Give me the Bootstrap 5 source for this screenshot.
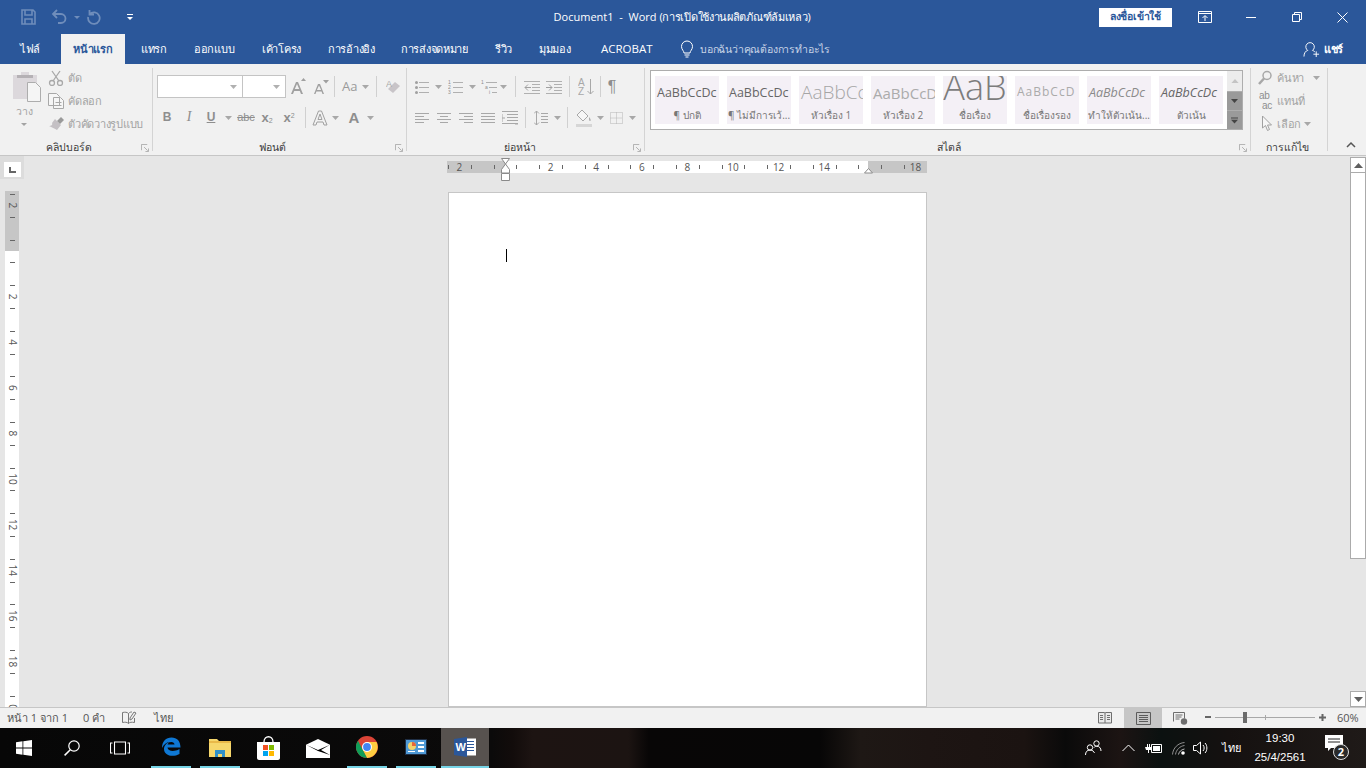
<!DOCTYPE html>
<html lang="th">
<head>
<meta charset="UTF-8">
<meta name="viewport" content="width=device-width, initial-scale=1.0">
<title>Document1 - Word</title>
<link href="https://cdn.jsdelivr.net/npm/bootstrap@5.3.3/dist/css/bootstrap.min.css" rel="stylesheet">
<style>
  /* -------- base -------- */
  html,body{height:100%;overflow:hidden;}
  body{font-family:"Open Sans","Noto Sans","Liberation Sans",sans-serif;font-size:11px;color:#444;background:#e6e6e6;line-height:1.2;}
  svg{display:block;flex:none;}
  .app-shell{height:768px;}

  /* -------- title bar + tabs -------- */
  .title-bar{height:34px;background:#2b579a;color:#fff;}
  .qat{width:540px;padding-left:21px;}
  .doc-title{width:284px;font-size:11px;text-align:center;white-space:nowrap;}
  .doc-state{letter-spacing:-.3px;}
  .signin-btn{width:73px;height:19px;margin-left:275px;background:#fff;color:#2b579a;font-size:10.5px;letter-spacing:-.2px;font-weight:600;border-radius:1px;}
  .win-btn{width:46px;height:34px;}
  .win-first{margin-left:9.5px;}
  .tab-bar{height:30px;background:#2b579a;color:#fff;font-size:11px;letter-spacing:-.3px;}
  .tab-item{height:30px;white-space:nowrap;padding-left:16px;}
  .tab-item.is-active{background:#f1f1f1;color:#2b579a;font-weight:600;padding-left:0;}
  .tab-latin{font-size:11.5px;letter-spacing:0;}
  .tell-me{color:#c8d4e6;font-size:10.5px;letter-spacing:-.2px;}
  .share-box{margin-right:23px;font-size:11px;font-weight:600;}

  /* -------- ribbon -------- */
  .ribbon{height:92px;padding:4px 0;background:#f1f1f1;border-bottom:1px solid #c6c6c6;}
  .rgroup{height:83px;border-right:1px solid #d4d4d4;flex:none;}
  .rg-clip{width:153px;}
  .rg-font{width:254px;}
  .rg-para{width:238px;}
  .rg-style{width:606px;padding-left:5px;}
  .rg-edit{width:77px;}
  .rg-foot{height:14px;margin-top:auto;margin-bottom:-3px;padding-right:3px;}
  .rg-name{flex:1;text-align:center;font-size:10.5px;color:#3b3b3b;white-space:nowrap;}
  .rg-launch{width:8px;margin-bottom:-1px;}
  .r-dim{color:#a3a3a3;}
  .paste-col{width:48px;padding:4px 0 0 13px;}
  .paste-name{width:22px;text-align:center;margin-top:3px;font-size:10.5px;}
  .small-stack{margin-top:-2px;}
  .small-row{height:23px;white-space:nowrap;font-size:11px;letter-spacing:-.25px;}
  .small-row svg{margin-right:3px;}
  .rb-row{height:23px;padding-left:4px;}
  .rb-row + .rb-row{margin-top:8px;}
  .rb-row.row-top{margin-top:7px;}
  .combo-box{height:23px;background:#fff;border:1px solid #c4c4c4;flex:none;}
  .combo-name{width:86px;}
  .combo-size{width:44px;margin-left:-1px;}
  .r-sep{width:1px;height:21px;background:#d0d0d0;flex:none;}
  .fmt-btn{width:22px;text-align:center;color:#8e8e8e;font-weight:700;font-size:12px;font-family:"Liberation Sans",sans-serif;flex:none;}

  /* gallery */
  .gallery{height:60px;margin-top:2px;width:593px;background:#fff;border:1px solid #adadad;}
  .gallery-items{padding:5px 0 0 4px;gap:8px;}
  .style-chip{width:64px;height:48px;background:#f4f0f6;overflow:hidden;text-align:center;flex:none;}
  .chip-top{height:33px;white-space:nowrap;overflow:hidden;font-size:12.5px;color:#666;padding-left:2px;}
  .chip-name{height:15px;font-size:10px;color:#777;white-space:nowrap;overflow:hidden;}
  .chip-h1{font-size:19px;color:#a5a5a5;font-weight:300;}
  .chip-h2{font-size:15px;color:#ababab;}
  .chip-title{font-size:36px;color:#7c7c7c;font-weight:300;line-height:21px;height:30px;padding-left:0;}
  .chip-sub{font-size:12px;letter-spacing:1px;color:#aaa;}
  .chip-em{font-style:italic;color:#8a8a8a;}
  .gal-scroll{width:15px;margin-left:auto;}
  .gal-btn{height:19px;background:#9a9a9a;border-top:1px solid #adadad;}
  .gal-btn.is-up{height:20px;background:#ececec;border-top:0;}
  .edit-stack{margin-top:-2px;}
  .edit-row{height:23px;padding-left:7px;white-space:nowrap;letter-spacing:-.2px;}
  .edit-name{margin-left:1px;}
  .collapse-box{padding:0 9px 2px 0;}

  /* -------- document area -------- */
  .doc-area{height:551px;background:#e6e6e6;overflow:hidden;}
  .left-rail{width:24px;flex:none;}
  .ruler-corner{height:23px;background:#dcdcdc;padding:6px 0 0 4px;}
  .corner-box{width:17px;height:15px;background:#fff;}
  .v-ruler{margin:12px 0 0 5px;}
  .doc-center{padding:2px 0 0 2px;min-width:0;}
  .doc-page{width:479px;height:520px;margin:10px 1px 0 0;background:#fff;border:1px solid #c6c6c6;padding:56px 0 0 57px;}
  .text-caret{width:1px;height:13px;background:#000;}
  .scroll-rail{width:16px;flex:none;background:#e6e6e6;}
  .scroll-btn{height:16px;margin-top:1px;background:#fff;border:1px solid #ababab;}
  .scroll-thumb{height:386px;background:#fff;border:1px solid #ababab;border-top:0;}
  .scroll-gap{height:131px;}

  /* -------- status bar -------- */
  .status-bar{height:21px;background:#f1f1f1;border-top:1px solid #c6c6c6;color:#555;font-size:11px;white-space:nowrap;padding-bottom:1px;}
  .view-btn{width:38px;height:20px;margin-bottom:-1px;}
  .view-btn.is-on{background:#c6c6c6;}
  .view-web{margin-left:-1px;}
  .zoom-minus{margin-left:6px;}
  .zoom-track{width:100px;height:1px;background:#a8a8a8;margin-left:3px;}
  .zoom-thumb{width:4px;height:11px;background:#6b6b6b;left:28px;}
  .zoom-mid{width:1px;height:5px;background:#a8a8a8;left:50px;}
  .zoom-plus{margin-left:4px;}
  .zoom-val{margin-left:11px;width:29px;}

  /* -------- taskbar -------- */
  .task-bar{height:40px;color:#fff;background:linear-gradient(90deg,#070707 0,#0b0a0a 36%,#120c0b 37.5%,#1d1412 39%,#1c1412 46%,#080606 47.5%,#070606 60%,#1e1815 63%,#1d1513 68%,#1b1311 75%,#0a0a0a 78%,#1c1413 82%,#0b1110 85%,#151110 90%,#1f1a18 100%);}
  .task-btn{width:48px;height:40px;flex:none;}
  .task-slot{height:40px;flex:none;}
  .task-btn.is-run{border-bottom:2px solid #76d4e6;width:40px;}
  .task-btn.is-word{background:#57524f;width:48px;margin-left:5px;}
  .tray-lang{margin-left:13px;width:19px;font-size:11px;}
  .tray-clock{width:56px;margin-left:11px;text-align:center;font-family:"Liberation Sans",sans-serif;font-size:11.5px;line-height:19px;white-space:nowrap;}
  .tray-note{margin:0 17px;width:24px;height:26px;}
  .note-count{left:8px;top:9px;width:16px;height:16px;border-radius:50%;border:1px solid #ddd;background:#2a2a2a;font-size:11px;}
</style>
</head>
<body>
<div class="app-shell d-flex flex-column">

  <!-- title bar -->
  <div class="title-bar d-flex align-items-center">
    <div class="qat d-flex align-items-center">
      <svg width="30" height="16" viewBox="0 0 30 16" fill="none" stroke="#6f8dbb" stroke-width="1.6"><path d="M1 1h11l2 2v12H1zM4 1v5h7V1M4 15V10h7v5"/></svg>
      <svg width="21" height="16" viewBox="0 0 21 16" fill="none" stroke="#6f8dbb" stroke-width="1.8"><path d="M6 1 2 5l4 4M2 5h8a4.500 4.500 0 0 1 0 9H7"/></svg>
      <svg width="14" height="16" viewBox="0 0 14 16" fill="#6f8dbb"><path d="M2 7h6l-3 3z"/></svg>
      <svg width="40" height="16" viewBox="0 0 40 16" fill="none" stroke="#6f8dbb" stroke-width="1.8"><path d="M3.500 1v4.500H8M3.800 5A5.800 5.800 0 1 1 2.200 8"/></svg>
      <svg width="8" height="16" viewBox="0 0 8 16" fill="#fff"><path d="M1 5h6v1H1zM1 8h6l-3 3z"/></svg>
    </div>
    <div class="doc-title">Document1 &nbsp;-&nbsp; Word <span class="doc-state">(การเปิดใช้งานผลิตภัณฑ์ล้มเหลว)</span></div>
    <button class="signin-btn btn p-0 border-0 rounded-0 d-flex align-items-center justify-content-center">ลงชื่อเข้าใช้</button>
    <div class="win-btn win-first d-flex align-items-center justify-content-center">
      <svg width="14" height="12" viewBox="0 0 14 12" fill="none" stroke="#fff"><path d="M.5.500h13v11H.5zM.5 2.500h13M7 10V5M4.500 7 7 4.500 9.500 7"/></svg>
    </div>
    <div class="win-btn d-flex align-items-center justify-content-center">
      <svg width="10" height="1" viewBox="0 0 10 1"><path d="M0 0h10v1H0z" fill="#fff"/></svg>
    </div>
    <div class="win-btn d-flex align-items-center justify-content-center">
      <svg width="10" height="10" viewBox="0 0 10 10" fill="none" stroke="#fff"><path d="M.5 2.500h7v7h-7zM2.500 2.500v-2h7v7h-2"/></svg>
    </div>
    <div class="win-btn d-flex align-items-center justify-content-center">
      <svg width="11" height="11" viewBox="0 0 11 11" stroke="#fff"><path d="M.5.500l10 10M10.500.500l-10 10"/></svg>
    </div>
  </div>

  <!-- tabs -->
  <div class="tab-bar d-flex align-items-center">
    <div class="tab-item d-flex align-items-center" style="width:61px;padding-left:20px">ไฟล์</div>
    <div class="tab-item is-active d-flex align-items-center justify-content-center" style="width:64px">หน้าแรก</div>
    <div class="tab-item d-flex align-items-center" style="width:53px">แทรก</div>
    <div class="tab-item d-flex align-items-center" style="width:68px">ออกแบบ</div>
    <div class="tab-item d-flex align-items-center" style="width:66px">เค้าโครง</div>
    <div class="tab-item d-flex align-items-center" style="width:73px">การอ้างอิง</div>
    <div class="tab-item d-flex align-items-center" style="width:94px">การส่งจดหมาย</div>
    <div class="tab-item d-flex align-items-center" style="width:44px">รีวิว</div>
    <div class="tab-item d-flex align-items-center" style="width:62px">มุมมอง</div>
    <div class="tab-item tab-latin d-flex align-items-center" style="width:93px">ACROBAT</div>
    <svg width="18" height="18" viewBox="0 0 18 18" fill="none" stroke="#fff"><path d="M6 13c0-2-2.500-3.500-2.500-6.500a5.500 5.500 0 0 1 11 0C14.500 9.500 12 11 12 13zM6.500 15h5M7.500 17h3"/></svg>
    <div class="tell-me ms-1 flex-grow-1">บอกฉันว่าคุณต้องการทำอะไร</div>
    <div class="share-box d-flex align-items-center">
      <svg width="17" height="18" viewBox="0 0 18 18" fill="none" stroke="#fff"><path d="M1 17c0-4 2-6 4-6.500a4.500 4.500 0 1 1 5 0c1 .3 1.800.8 2.500 1.500M11 14.500h6M14 11.500v6"/></svg>
      <span class="ms-1">แชร์</span>
    </div>
  </div>

  <!-- ribbon -->
  <div class="ribbon d-flex">

    <div class="rgroup rg-clip d-flex flex-column">
      <div class="d-flex">
        <div class="paste-col r-dim">
          <svg width="28" height="30" viewBox="0 0 28 30"><path d="M0 3h8V0h8v3h8v24H0z" fill="#dcd8dc"/><path d="M4 3h16v3H4z" fill="#b5b1b5"/><path d="M14.500 10.500h8l5 5v14h-13z" fill="#f5f5f5" stroke="#adadad"/></svg>
          <div class="paste-name">วาง</div>
          <svg width="22" height="14" viewBox="0 0 22 14" fill="#a3a3a3"><path d="M8 5h6l-3 3z"/></svg>
        </div>
        <div class="small-stack r-dim">
          <div class="small-row d-flex align-items-center">
            <svg width="17" height="16" viewBox="0 0 17 16" fill="none" stroke="#a8a8a8" stroke-width="1.300"><circle cx="4" cy="13" r="2.500"/><circle cx="12" cy="13" r="2.500"/><path d="M5 11 12 1M11 11 4 1"/></svg>
            <span>ตัด</span>
          </div>
          <div class="small-row d-flex align-items-center">
            <svg width="17" height="16" viewBox="0 0 17 16" fill="#f6f6f6" stroke="#a8a8a8"><path d="M.5.500h8l3 3v9h-11zM5.500 4.500h7l3 3v8h-10zM7.500 9.500h6M7.500 12.500h6"/></svg>
            <span>คัดลอก</span>
          </div>
          <div class="small-row d-flex align-items-center">
            <svg width="17" height="16" viewBox="0 0 17 16"><path d="M7 3l6 6-4 5C6 12 3 11 1 10c2 0 4-1 3-3z" fill="#c4c0c4"/><path d="M9 5l4-4 3 3-4 4z" fill="#9a9a9a"/></svg>
            <span>ตัวคัดวางรูปแบบ</span>
          </div>
        </div>
      </div>
      <div class="rg-foot d-flex align-items-center">
        <div class="rg-name pe-1">คลิปบอร์ด</div>
        <svg class="rg-launch" width="8" height="8" viewBox="0 0 9 9" fill="none" stroke="#a8a8a8"><path d="M.5 7V.500H7M3.500 3.500l4 4M8.500 5v3.500H5"/></svg>
      </div>
    </div>

    <div class="rgroup rg-font d-flex flex-column">
      <div class="rb-row row-top d-flex align-items-center">
        <div class="combo-box combo-name d-flex align-items-center justify-content-end pe-1">
          <svg width="8" height="4" viewBox="0 0 8 4" fill="#b0b0b0"><path d="M0 0h7L3.500 4z"/></svg>
        </div>
        <div class="combo-box combo-size d-flex align-items-center justify-content-end pe-1">
          <svg width="8" height="4" viewBox="0 0 8 4" fill="#b0b0b0"><path d="M0 0h7L3.500 4z"/></svg>
        </div>
        <svg width="24" height="18" viewBox="0 0 24 18" fill="#a0a0a0" style="margin-left:3px"><path d="M2 16 7 4h2l5 12h-2l-1.200-3H5.200L4 16zM5.800 11h4.400L8 6z"/><path d="M12 3l2.500-3L17 3z"/></svg>
        <svg width="19" height="18" viewBox="0 0 19 18" fill="#a0a0a0"><path d="M1 16 5 6h2l4 10H9.500l-.9-2.500H3.400L2.500 16zM3.900 12h4.200L6 7.500zM10 2h6l-3 3.500z"/></svg>
        <div class="r-sep" style="margin-left:2px"></div>
        <span style="width:27px;padding-left:7px;font-size:13px;color:#9a9a9a">Aa</span>
        <svg width="14" height="8" viewBox="0 0 14 8" fill="#a8a8a8" style="margin-left:-3px"><path d="M3 2h7L6.500 6z"/></svg>
        <div class="r-sep" style="margin-left:3px"></div>
        <svg width="15" height="16" viewBox="0 0 15 16" style="margin-left:9px"><path d="M2 10 9 3l5 4-7 7z" fill="#c8c4c8"/><text x="0" y="8" font-size="9" fill="#a8a8a8" font-family="Liberation Sans">A</text></svg>
      </div>
      <div class="rb-row d-flex align-items-center" style="padding-left:3px">
        <div class="fmt-btn">B</div>
        <div class="fmt-btn fst-italic fw-normal" style="font-family:'Liberation Serif',serif;font-size:14px">I</div>
        <div class="fmt-btn text-decoration-underline">U</div>
        <svg width="14" height="8" viewBox="0 0 14 8" fill="#a8a8a8"><path d="M3 2h7L6.500 6z"/></svg>
        <div class="fmt-btn fw-normal text-decoration-line-through" style="font-size:11px;width:20px">abc</div>
        <div class="fmt-btn" style="font-size:13px">x<sub style="font-size:7px;font-weight:400">2</sub></div>
        <div class="fmt-btn" style="font-size:13px">x<sup style="font-size:7px;font-weight:400">2</sup></div>
        <div class="r-sep" style="margin-left:5px"></div>
        <svg width="29" height="18" viewBox="0 0 29 18" fill="#f1f1f1" stroke="#a0a0a0" style="margin-left:6px"><path d="M1 16 6.500 2h3L15 16h-3l-1-3H5l-1 3zM6 10.500h4L8 5z"/></svg>
        <svg width="9" height="8" viewBox="0 0 9 8" fill="#a8a8a8" style="margin-left:-10px"><path d="M1 2h7L4.500 6z"/></svg>
        <div class="fmt-btn" style="font-size:15px;margin-left:3px">A</div>
        <svg width="14" height="8" viewBox="0 0 14 8" fill="#a8a8a8"><path d="M2 2h7L5.500 6z"/></svg>
      </div>
      <div class="rg-foot d-flex align-items-center">
        <div class="rg-name pe-1">ฟอนต์</div>
        <svg class="rg-launch" width="8" height="8" viewBox="0 0 9 9" fill="none" stroke="#a8a8a8"><path d="M.5 7V.500H7M3.500 3.500l4 4M8.500 5v3.500H5"/></svg>
      </div>
    </div>

    <div class="rgroup rg-para d-flex flex-column">
      <div class="rb-row row-top d-flex align-items-center" style="padding-left:8px">
        <svg width="15" height="14" viewBox="0 0 15 14" stroke="#b0b0b0"><path d="M4 2.500h10M4 7.500h10M4 12.500h10"/><g fill="#a0a0a0" stroke="none"><circle cx="1.500" cy="2.500" r="1.500"/><circle cx="1.500" cy="7.500" r="1.500"/><circle cx="1.500" cy="12.500" r="1.500"/></g></svg>
        <svg width="17" height="8" viewBox="0 0 17 8" fill="#a8a8a8"><path d="M5 2h7L8.500 6z"/></svg>
        <svg width="16" height="14" viewBox="0 0 16 14" stroke="#b0b0b0" style="margin-left:1px"><path d="M5 2.500h10M5 7.500h10M5 12.500h10"/><g font-size="5" fill="#8e8e8e" stroke="none" font-family="Liberation Sans"><text x="0" y="4">1</text><text x="0" y="9">2</text><text x="0" y="14">3</text></g></svg>
        <svg width="17" height="8" viewBox="0 0 17 8" fill="#a8a8a8"><path d="M5 2h7L8.500 6z"/></svg>
        <svg width="17" height="14" viewBox="0 0 17 14" stroke="#b0b0b0"><path d="M5 2.500h11M8 7.500h8M11 12.500h5"/><g font-size="5" fill="#8e8e8e" stroke="none" font-family="Liberation Sans"><text x="0" y="4">1</text><text x="4" y="9">a</text><text x="8" y="14">i</text></g></svg>
        <svg width="17" height="8" viewBox="0 0 17 8" fill="#a8a8a8"><path d="M2 2h7L5.500 6z"/></svg>
        <div class="r-sep"></div>
        <svg width="17" height="14" viewBox="0 0 17 14" stroke="#b0b0b0" fill="none" style="margin-left:8px"><path d="M0 1.500h16M8 4.500h8M8 7.500h8M8 10.500h8M0 13.500h16"/><path d="M7 7.500H1M4 4.500l-3 3 3 3" stroke="#a0a0a0"/></svg>
        <svg width="17" height="14" viewBox="0 0 17 14" stroke="#b0b0b0" fill="none" style="margin-left:5px"><path d="M0 1.500h16M8 4.500h8M8 7.500h8M8 10.500h8M0 13.500h16"/><path d="M0 7.500h6M3 4.500l3 3-3 3" stroke="#a0a0a0"/></svg>
        <div class="r-sep" style="margin-left:6px"></div>
        <svg width="17" height="18" viewBox="0 0 17 18" fill="none" stroke="#a8a8a8" style="margin-left:8px"><path d="M12.500 1v15M9.500 13l3 3 3-3"/><text x="0" y="8" font-size="10" fill="#a8a8a8" stroke="none" font-family="Liberation Sans">A</text><text x="0" y="17" font-size="10" fill="#a8a8a8" stroke="none" font-family="Liberation Sans">Z</text></svg>
        <div class="r-sep" style="margin-left:5px"></div>
        <div class="fmt-btn" style="font-size:16px;font-weight:400">¶</div>
      </div>
      <div class="rb-row d-flex align-items-center" style="padding-left:8px">
        <svg width="22" height="12" viewBox="0 0 22 12" stroke="#a8a8a8"><path d="M0 1.500h14M0 4.500h9M0 7.500h14M0 10.500h9"/></svg>
        <svg width="22" height="12" viewBox="0 0 22 12" stroke="#a8a8a8"><path d="M0 1.500h14M3 4.500h8M0 7.500h14M3 10.500h8"/></svg>
        <svg width="22" height="12" viewBox="0 0 22 12" stroke="#a8a8a8"><path d="M0 1.500h14M5 4.500h9M0 7.500h14M5 10.500h9"/></svg>
        <svg width="21" height="12" viewBox="0 0 21 12" stroke="#a8a8a8"><path d="M0 1.500h14M0 4.500h14M0 7.500h14M0 10.500h14"/></svg>
        <svg width="23" height="14" viewBox="0 0 23 14" stroke="#a8a8a8" fill="none"><path d="M0 .500h16M5 3.500h11M5 6.500h11M5 9.500h11M0 12.500h16M0 3v8M3 7H0M13 13h3"/></svg>
        <div class="r-sep"></div>
        <svg width="14" height="16" viewBox="0 0 14 16" fill="none" stroke="#a8a8a8" style="margin-left:8px"><path d="M2.500 1v14M0 3.500l2.500-2.500L5 3.500M0 12.500 2.500 15 5 12.500M7 3.500h7M7 6.500h7M7 9.500h7M7 12.500h7"/></svg>
        <svg width="19" height="8" viewBox="0 0 19 8" fill="#a8a8a8"><path d="M6 2h7L9.500 6z"/></svg>
        <div class="r-sep"></div>
        <svg width="16" height="18" viewBox="0 0 16 18" style="margin-left:8px"><path d="M6 1l6 6-5 5-6-6z" fill="#f6f6f6" stroke="#a8a8a8"/><path d="M13 8c2 2 2 4 1 4s-1-2-1-4z" fill="#a8a8a8"/><path d="M0 15h16v3H0z" fill="#d6d6d6"/></svg>
        <svg width="18" height="8" viewBox="0 0 18 8" fill="#a8a8a8"><path d="M5 2h7L8.500 6z"/></svg>
        <svg width="13" height="12" viewBox="0 0 13 12" fill="none" stroke="#b4b4b4" stroke-dasharray="1 1"><path d="M.5.500h12v11H.5zM6.500.500v11M.5 6h12"/></svg>
        <svg width="16" height="8" viewBox="0 0 16 8" fill="#a8a8a8"><path d="M6 2h7L9.500 6z"/></svg>
      </div>
      <div class="rg-foot d-flex align-items-center">
        <div class="rg-name">ย่อหน้า</div>
        <svg class="rg-launch" width="8" height="8" viewBox="0 0 9 9" fill="none" stroke="#a8a8a8"><path d="M.5 7V.500H7M3.500 3.500l4 4M8.500 5v3.500H5"/></svg>
      </div>
    </div>

    <div class="rgroup rg-style d-flex flex-column">
      <div class="gallery d-flex">
        <div class="gallery-items d-flex">
          <div class="style-chip"><div class="chip-top d-flex align-items-center">AaBbCcDc</div><div class="chip-name">¶ ปกติ</div></div>
          <div class="style-chip"><div class="chip-top d-flex align-items-center">AaBbCcDc</div><div class="chip-name">¶ ไม่มีการเว้...</div></div>
          <div class="style-chip"><div class="chip-top chip-h1 d-flex align-items-center">AaBbCc</div><div class="chip-name">หัวเรื่อง 1</div></div>
          <div class="style-chip"><div class="chip-top chip-h2 d-flex align-items-center">AaBbCcD</div><div class="chip-name">หัวเรื่อง 2</div></div>
          <div class="style-chip"><div class="chip-top chip-title d-flex justify-content-center">AaB</div><div class="chip-name" style="padding-top:3px;height:18px">ชื่อเรื่อง</div></div>
          <div class="style-chip"><div class="chip-top chip-sub d-flex align-items-center">AaBbCcD</div><div class="chip-name">ชื่อเรื่องรอง</div></div>
          <div class="style-chip"><div class="chip-top chip-em d-flex align-items-center">AaBbCcDc</div><div class="chip-name">ทำให้ตัวเน้น...</div></div>
          <div class="style-chip"><div class="chip-top chip-em d-flex align-items-center" style="color:#666">AaBbCcDc</div><div class="chip-name">ตัวเน้น</div></div>
        </div>
        <div class="gal-scroll">
          <div class="gal-btn is-up d-flex align-items-center justify-content-center"><svg width="8" height="4" viewBox="0 0 9 5" fill="#c4c4c4"><path d="M0 5 4.500 0 9 5z"/></svg></div>
          <div class="gal-btn d-flex align-items-center justify-content-center"><svg width="7" height="4" viewBox="0 0 9 5" fill="#444"><path d="M0 0h9L4.500 5z"/></svg></div>
          <div class="gal-btn d-flex align-items-center justify-content-center"><svg width="7" height="7" viewBox="0 0 9 8" fill="#444"><path d="M0 0h9v1.500H0zM0 3h9L4.500 8z"/></svg></div>
        </div>
      </div>
      <div class="rg-foot d-flex align-items-center">
        <div class="rg-name ps-2">สไตล์</div>
        <svg class="rg-launch" width="8" height="8" viewBox="0 0 9 9" fill="none" stroke="#a8a8a8"><path d="M.5 7V.500H7M3.500 3.500l4 4M8.500 5v3.500H5"/></svg>
      </div>
    </div>

    <div class="rgroup rg-edit d-flex flex-column r-dim">
      <div class="edit-stack">
        <div class="edit-row d-flex align-items-center">
          <svg width="18" height="15" viewBox="0 0 18 15" fill="none" stroke="#a8a8a8" stroke-width="1.500"><circle cx="9" cy="5.500" r="4"/><path d="M6 8.500 1 14" stroke-width="2.500"/></svg>
          <span class="edit-name">ค้นหา</span>
          <svg width="16" height="8" viewBox="0 0 16 8" fill="#a8a8a8" style="margin-left:5px"><path d="M4 2h7L7.500 6z"/></svg>
        </div>
        <div class="edit-row d-flex align-items-center">
          <svg width="18" height="19" viewBox="0 0 18 19" fill="#8e8e8e"><text x="1" y="8" font-size="10" font-family="Liberation Sans">ab</text><text x="4" y="18" font-size="10" font-family="Liberation Sans">ac</text></svg>
          <span class="edit-name">แทนที่</span>
        </div>
        <div class="edit-row d-flex align-items-center">
          <svg width="18" height="17" viewBox="0 0 18 17" fill="#f6f6f6" stroke="#a0a0a0"><path d="M4.500 1v12l3-2.500 2 5 2-1-2-4.500h4z"/></svg>
          <span class="edit-name">เลือก</span>
          <svg width="12" height="8" viewBox="0 0 12 8" fill="#a8a8a8" style="margin-left:1px"><path d="M2 2h7L5.500 6z"/></svg>
        </div>
      </div>
      <div class="rg-foot d-flex align-items-center"><div class="rg-name">การแก้ไข</div></div>
    </div>

    <div class="collapse-box flex-grow-1 d-flex align-items-end justify-content-end">
      <svg width="12" height="8" viewBox="0 0 12 8" fill="none" stroke="#555" stroke-width="1.500"><path d="M2 6l4-4 4 4"/></svg>
    </div>
  </div>

  <!-- document -->
  <div class="doc-area d-flex">
    <div class="left-rail">
      <div class="ruler-corner">
        <div class="corner-box d-flex align-items-center justify-content-center">
          <svg width="7" height="6" viewBox="0 0 7 6" fill="#666"><path d="M0 0h2v4h5v2H0z"/></svg>
        </div>
      </div>
      <svg class="v-ruler" id="vRuler" width="14" height="516" viewBox="0 0 14 516"></svg>
    </div>
    <div class="doc-center flex-grow-1 d-flex flex-column align-items-center">
      <svg id="hRuler" width="482" height="24" viewBox="0 0 482 24"></svg>
      <div class="doc-page"><div class="text-caret"></div></div>
    </div>
    <div class="scroll-rail">
      <div class="scroll-btn d-flex align-items-center justify-content-center"><svg width="9" height="5" viewBox="0 0 9 5" fill="#5f5f5f"><path d="M0 5 4.500 0 9 5z"/></svg></div>
      <div class="scroll-thumb"></div>
      <div class="scroll-gap"></div>
      <div class="scroll-btn d-flex align-items-center justify-content-center"><svg width="9" height="5" viewBox="0 0 9 5" fill="#5f5f5f"><path d="M0 0h9L4.500 5z"/></svg></div>
    </div>
  </div>

  <!-- status bar -->
  <div class="status-bar d-flex align-items-center">
    <span style="width:83px;padding-left:7px">หน้า 1 จาก 1</span>
    <span style="width:39px">0 คำ</span>
    <svg width="15" height="13" viewBox="0 0 15 13" fill="none" stroke="#777"><path d="M.5 1.500C3 1 5 1 6.500 2.500v10C5 11 3 11 .5 11.500zM6.500 2.500C8 1 9 1 10 1M6.500 12.500c1.500-1.500 3-1.500 6-1V7M8 7l4-6 2 1-4 6-2 1z"/></svg>
    <span style="margin-left:17px">ไทย</span>
    <div class="flex-grow-1"></div>
    <div class="view-btn d-flex align-items-center justify-content-center">
      <svg width="14" height="12" viewBox="0 0 14 12" fill="#e9e9e9" stroke="#6e6e6e"><path d="M.5.500h6l.5 1 .5-1h6v10.500h-13zM7 1.500V11M2 3.500h3M2 5.500h3M2 7.500h3M9 3.500h3M9 5.500h3M9 7.500h3"/></svg>
    </div>
    <div class="view-btn is-on d-flex align-items-center justify-content-center">
      <svg width="15" height="13" viewBox="0 0 15 13" fill="none" stroke="#5c5c5c"><path d="M.5.500h14v12H.5zM3 3.500h9M3 5.500h9M3 7.500h9M3 9.500h9"/></svg>
    </div>
    <div class="view-btn view-web d-flex align-items-center justify-content-center">
      <svg width="15" height="13" viewBox="0 0 15 13" fill="none" stroke="#6e6e6e"><path d="M.5 9.500v-9h11v6M2.500 3h7M2.500 5h6M2.500 7h4"/><circle cx="11" cy="9.500" r="3.200" fill="#6e6e6e" stroke="none"/></svg>
    </div>
    <svg class="zoom-minus" width="7" height="3" viewBox="0 0 7 3"><path d="M0 0h6v2H0z" fill="#666"/></svg>
    <div class="zoom-track d-flex align-items-center position-relative">
      <div class="zoom-thumb position-absolute"></div>
      <div class="zoom-mid position-absolute"></div>
    </div>
    <svg class="zoom-plus" width="7" height="7" viewBox="0 0 7 7"><path d="M2.500 0h2v2.500H7v2H4.500V7h-2V4.500H0v-2h2.500z" fill="#666"/></svg>
    <span class="zoom-val">60%</span>
  </div>

  <!-- taskbar -->
  <div class="task-bar d-flex align-items-center">
    <div class="task-btn d-flex align-items-center justify-content-center">
      <svg width="16" height="16" viewBox="0 0 16 16" fill="#fff"><path d="M0 2.200 6.500 1.300v6.300H0zM7.300 1.200 16 0v7.600H7.300zM0 8.400h6.500v6.300L0 13.800zM7.300 8.400H16V16l-8.700-1.200z"/></svg>
    </div>
    <div class="task-btn d-flex align-items-center justify-content-center">
      <svg width="16" height="16" viewBox="0 0 16 16" fill="none" stroke="#fff" stroke-width="1.200"><circle cx="10" cy="6" r="5.200"/><path d="M6.300 9.700 .6 15.400" stroke-width="1.500"/></svg>
    </div>
    <div class="task-btn d-flex align-items-center justify-content-center">
      <svg width="20" height="14" viewBox="0 0 20 14" fill="none" stroke="#fff" stroke-width="1.100"><path d="M4.500 1h11v12h-11zM2.500 2H.5v10h2M17.500 2h2v10h-2"/></svg>
    </div>
    <div class="task-btn is-run d-flex align-items-center justify-content-center" style="margin-left:7px">
      <svg width="20" height="20" viewBox="0 0 20 20" fill="none"><path d="M1 11C1 4.500 5 .5 10.500.5c5.500 0 9 3.500 9 10H6.500c.3 3.500 6 5 12 1.500v5c-7 3.800-15.500 1.500-15.500-5C3 9 5 6 9.500 5 6 4.500 3 7 1 11zM6.500 7.500h7c0-3.500-6-3.500-7 0z" fill="#0f78d4"/></svg>
    </div>
    <div class="task-btn is-run d-flex align-items-center justify-content-center" style="margin-left:9px">
      <svg width="22" height="19" viewBox="0 0 22 19"><path d="M0 1h8l2 2h12v16H0z" fill="#f6d76c"/><path d="M0 3h22v2H0z" fill="#e9b949"/><path d="M6 19v-7h10v7h-3v-3H9v3z" fill="#2f90c9"/></svg>
    </div>
    <div class="task-slot d-flex align-items-center justify-content-center" style="width:57px">
      <svg width="23" height="24" viewBox="0 0 23 24"><path d="M7 6c0-7 9-7 9 0" fill="none" stroke="#fff" stroke-width="1.300"/><path d="M0 6h23v16c0 1-1 2-2 2H2c-1 0-2-1-2-2z" fill="#fff"/><path d="M6 9h5v5H6z" fill="#f25022"/><path d="M12 9h5v5h-5z" fill="#7fba00"/><path d="M6 15h5v5H6z" fill="#00a4ef"/><path d="M12 15h5v5h-5z" fill="#ffb900"/></svg>
    </div>
    <div class="task-slot d-flex align-items-center justify-content-center" style="width:42px">
      <svg width="24" height="19" viewBox="0 0 24 19"><path d="M0 5.700 12 0l12 5.700V19H0z" fill="#fff"/><path d="M0 5.700 12 11 24 5.700 15 11l9 5-12-4z" fill="#000"/></svg>
    </div>
    <div class="task-btn is-run d-flex align-items-center justify-content-center" style="margin-left:8px">
      <svg width="22" height="22" viewBox="0 0 22 22"><circle cx="11" cy="11" r="11" fill="#db4437"/><path d="M11 6h9.500A11 11 0 0 1 11 22l-4.500-8.500z" fill="#ffcd40"/><path d="M2 4.700 6.500 13.500 11 22A11 11 0 0 1 2 4.700z" fill="#0f9d58"/><circle cx="11" cy="11" r="5" fill="#fff"/><circle cx="11" cy="11" r="3.900" fill="#4285f4"/></svg>
    </div>
    <div class="task-btn is-run d-flex align-items-center justify-content-center" style="margin-left:9px">
      <svg width="22" height="16" viewBox="0 0 22 16"><path d="M0 0h22v16H0z" fill="#1f2f46"/><path d="M1 1h20v14H1z" fill="#4f9ad6"/><circle cx="7" cy="7" r="4" fill="#f3d36b"/><path d="M7 7V3a4 4 0 0 1 4 4z" fill="#e8663b"/><path d="M13 3h6v2h-6zM13 7h6v2h-6zM13 11h6v2h-6zM3 12h7v1H3z" fill="#fff"/></svg>
    </div>
    <div class="task-btn is-run is-word d-flex align-items-center justify-content-center">
      <svg width="22" height="20" viewBox="0 0 22 20"><path d="M7 1.500h15v17H7z" fill="#fff"/><path d="M13 4.500h7M13 7.500h7M13 10.500h7M13 13.500h7" stroke="#2b579a"/><path d="M0 2 13 0v20L0 18z" fill="#2b579a"/><text x="1.500" y="14" font-size="11" font-weight="700" fill="#fff" font-family="Liberation Sans">W</text></svg>
    </div>
    <div class="flex-grow-1"></div>
    <svg width="17" height="16" viewBox="0 0 17 16" fill="none" stroke="#fff"><circle cx="5" cy="7.500" r="2.700"/><circle cx="11.500" cy="3.500" r="2.700"/><path d="M.5 15c0-3 1.500-5 4.500-5s4 2 4.500 3M9 7.500c.8-1 1.500-1.300 2.500-1.300 3 0 4.500 2 4.500 4.800"/></svg>
    <svg width="13" height="8" viewBox="0 0 13 8" fill="none" stroke="#fff" style="margin-left:20px"><path d="M.5 7 6.500 1l6 6"/></svg>
    <svg width="17" height="11" viewBox="0 0 17 11" fill="#fff" style="margin-left:10px"><path d="M0 4h2V1h1v3h1V1h1v3h1v3H4v3H3V7H1z"/><path d="M6.500 1.500h10v8h-10z" fill="none" stroke="#fff"/><path d="M8 3h7v5H8z"/></svg>
    <svg width="14" height="13" viewBox="0 0 14 13" fill="none" stroke="#fff" style="margin-left:10px"><path d="M.5 12.500C1 6 6 1 12.500.5M3.500 12.500C4 8 8 4 12.500 3.500" stroke="#8e8e8e"/><path d="M6.500 12.500C7 10 9 7.500 12.500 7" stroke="#bbb"/><circle cx="11" cy="11" r="1.800" fill="#fff" stroke="none"/></svg>
    <svg width="16" height="14" viewBox="0 0 16 14" fill="none" stroke="#fff" style="margin-left:7px"><path d="M.5 4.500h3l4-3.500v12l-4-3.500h-3zM10 4c1.500 1.500 1.500 4.500 0 6M12 2c2.500 2.500 2.500 7.500 0 10"/></svg>
    <span class="tray-lang">ไทย</span>
    <div class="tray-clock"><div>19:30</div><div>25/4/2561</div></div>
    <div class="tray-note position-relative">
      <svg width="18" height="16" viewBox="0 0 18 16" fill="#fff"><path d="M0 0h18v13H6l-3 3v-3H0z"/><path d="M3 4h12M3 7h12" stroke="#222"/></svg>
      <span class="note-count position-absolute d-flex align-items-center justify-content-center fw-bold">2</span>
    </div>
  </div>
</div>

<script>
  /* ---------- ruler ticks + numbers ---------- */
  const NS = "http://www.w3.org/2000/svg";
  function add(svg, tag, attrs, txt){
    const el = document.createElementNS(NS, tag);
    for (const k in attrs) el.setAttribute(k, attrs[k]);
    if (txt !== undefined) el.textContent = txt;
    svg.appendChild(el);
  }
  const UNIT = 11.4, txtFont = {"font-size":10, fill:"#555", "font-family":"Open Sans, sans-serif", "text-anchor":"middle"};

  // horizontal one: svg x 0 = screen 447, y 0 = screen 158
  const h = document.getElementById("hRuler"), ox = 58, ry = 3;
  add(h, "rect", {x:0, y:ry, width:480, height:12, fill:"#c6c6c6"});
  add(h, "rect", {x:ox, y:ry, width:363, height:12, fill:"#fff"});
  for (let n = -5; n < 37; n += 2) {
    const x = Math.round(ox + n * UNIT);
    if (x > 0 && x < 480) add(h, "rect", {x:x, y:ry+4, width:1, height:4, fill:"#666"});
  }
  [[-4,"2"],[4,"2"],[8,"4"],[12,"6"],[16,"8"],[20,"10"],[24,"12"],[28,"14"],[36,"18"]].forEach(([n,t]) => {
    add(h, "text", Object.assign({x:ox + n * UNIT, y:ry+9.500}, txtFont), t);
  });
  // indent markers
  const mk = {fill:"#fff", stroke:"#8a8a8a"};
  add(h, "path", Object.assign({d:"M54.500 .5h8l-4 5.500 4 5.500v3.500h-8V11.500l4-5.500z"}, mk));
  add(h, "path", Object.assign({d:"M54.500 15.500h8v7h-8z"}, mk));
  add(h, "path", Object.assign({d:"M421.500 10.500l4 4.500h-8z"}, mk));

  // vertical one: y 0 = screen 191
  const v = document.getElementById("vRuler"), oy = 60;
  add(v, "rect", {x:0, y:0, width:14, height:516, fill:"#fff"});
  add(v, "rect", {x:0, y:0, width:14, height:oy, fill:"#c6c6c6"});
  for (let n = -5; n < 41; n += 2) {
    const y = Math.round(oy + n * UNIT);
    if (y > 0 && y < 516) add(v, "rect", {x:5, y:y, width:5, height:1, fill:"#666"});
  }
  [[-4,"2"],[4,"2"],[8,"4"],[12,"6"],[16,"8"],[20,"10"],[24,"12"],[28,"14"],[32,"16"],[36,"18"],[40,"0"]].forEach(([n,t]) => {
    const y = oy + n * UNIT;
    add(v, "text", Object.assign({x:0, y:0, transform:`translate(4 ${y}) rotate(90)`}, txtFont), t);
  });
</script>
<script src="https://cdn.jsdelivr.net/npm/bootstrap@5.3.3/dist/js/bootstrap.bundle.min.js"></script>
</body>
</html>
